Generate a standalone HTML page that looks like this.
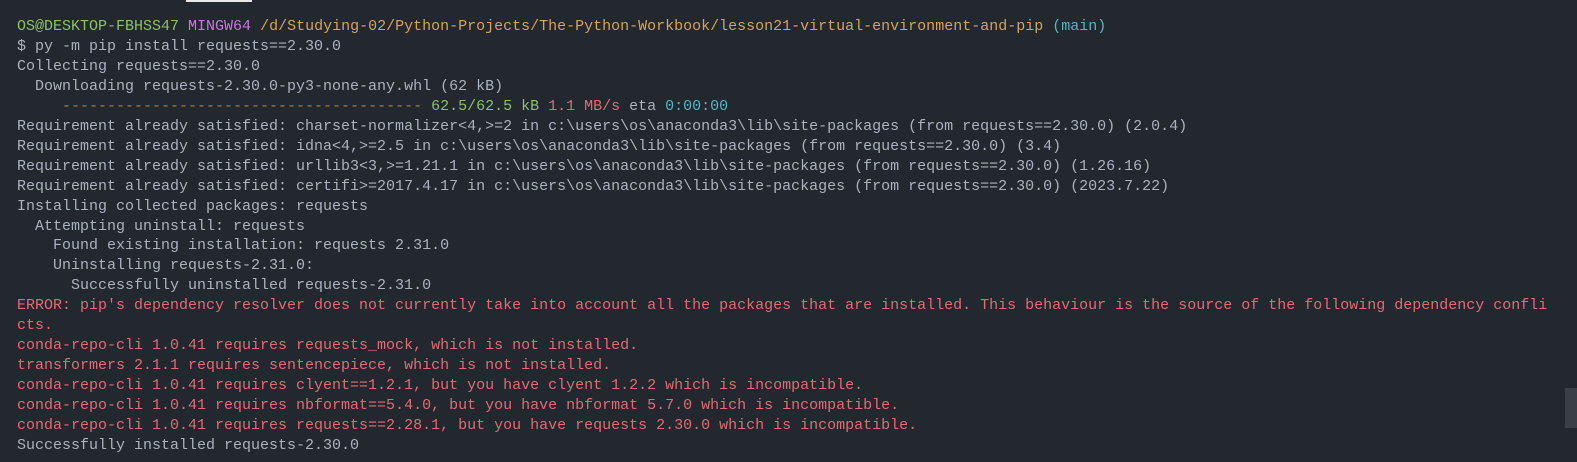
<!DOCTYPE html>
<html><head><meta charset="utf-8"><style>
html,body{margin:0;padding:0;background:#23272e;width:1577px;height:462px;overflow:hidden}
pre{margin:0;position:absolute;left:17px;top:17px;font-family:"Liberation Mono",monospace;font-size:15px;line-height:19.95px;color:#abb2bf;white-space:pre}
.g{color:#8cc265}.p{color:#c678dd}.y{color:#d4a35f}.c{color:#56b6c2}.r{color:#e06c75}.d{color:#a87d4f}
.bar{position:absolute;left:186px;top:0;width:66px;height:2px;background:#e8e8e8}
.sb{position:absolute;left:1565px;top:388px;width:12px;height:40px;background:#3a3f47}
</style></head><body>
<div class="bar"></div><div class="sb"></div>
<pre><span class="g">OS@DESKTOP-FBHSS47</span> <span class="p">MINGW64</span> <span class="y">/d/Studying-02/Python-Projects/The-Python-Workbook/lesson21-virtual-environment-and-pip</span> <span class="c">(main)</span>
$ py -m pip install requests==2.30.0
Collecting requests==2.30.0
  Downloading requests-2.30.0-py3-none-any.whl (62 kB)
     <span class="d">----------------------------------------</span> <span class="g">62.5/62.5 kB</span> <span class="r">1.1 MB/s</span> eta <span class="c">0:00:00</span>
Requirement already satisfied: charset-normalizer&lt;4,&gt;=2 in c:\users\os\anaconda3\lib\site-packages (from requests==2.30.0) (2.0.4)
Requirement already satisfied: idna&lt;4,&gt;=2.5 in c:\users\os\anaconda3\lib\site-packages (from requests==2.30.0) (3.4)
Requirement already satisfied: urllib3&lt;3,&gt;=1.21.1 in c:\users\os\anaconda3\lib\site-packages (from requests==2.30.0) (1.26.16)
Requirement already satisfied: certifi&gt;=2017.4.17 in c:\users\os\anaconda3\lib\site-packages (from requests==2.30.0) (2023.7.22)
Installing collected packages: requests
  Attempting uninstall: requests
    Found existing installation: requests 2.31.0
    Uninstalling requests-2.31.0:
      Successfully uninstalled requests-2.31.0
<span class="r">ERROR: pip's dependency resolver does not currently take into account all the packages that are installed. This behaviour is the source of the following dependency confli
cts.
conda-repo-cli 1.0.41 requires requests_mock, which is not installed.
transformers 2.1.1 requires sentencepiece, which is not installed.
conda-repo-cli 1.0.41 requires clyent==1.2.1, but you have clyent 1.2.2 which is incompatible.
conda-repo-cli 1.0.41 requires nbformat==5.4.0, but you have nbformat 5.7.0 which is incompatible.
conda-repo-cli 1.0.41 requires requests==2.28.1, but you have requests 2.30.0 which is incompatible.</span>
Successfully installed requests-2.30.0</pre>
</body></html>
